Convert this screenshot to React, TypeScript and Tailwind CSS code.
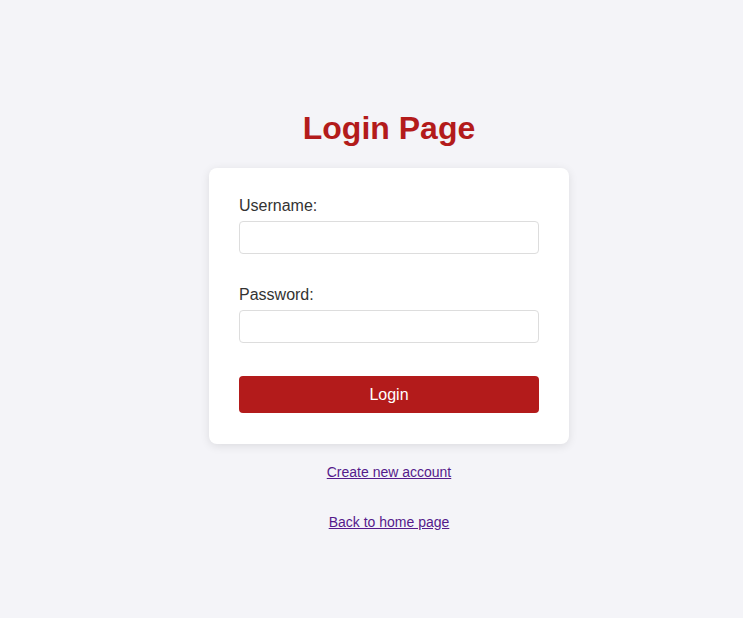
import React, { useState } from 'react';

const App = () => {
  const [username, setUsername] = useState<string>('')
  const [password, setPassword] = useState<string>('')

  return (
    <div className="min-h-[618px] w-full bg-[#f4f4f8] pl-[35px] pt-[110px] font-['Liberation_Sans',Arial,sans-serif]">
      <div className="flex flex-col items-center">
        <h1 className="mb-[21px] text-[32px] font-bold leading-[37px] text-[#b31b1b]">Login Page</h1>
        <div className="w-[360px] rounded-lg bg-white px-[30px] pt-[29px] pb-[31px] shadow-[0_2px_10px_rgba(0,0,0,0.1)]">
          <label className="block text-base leading-[18px] text-[#333]">Username:</label>
          <input
            value={username}
            onChange={(e) => setUsername(e.target.value)}
            className="mt-[6px] block h-[33px] w-full rounded border border-[#ddd] px-2 outline-none"
          />
          <label className="mt-[32px] block text-base leading-[18px] text-[#333]">Password:</label>
          <input
            type="password"
            value={password}
            onChange={(e) => setPassword(e.target.value)}
            className="mt-[6px] block h-[33px] w-full rounded border border-[#ddd] px-2 outline-none"
          />
          <button className="mt-[33px] block h-[37px] w-full rounded bg-[#b31b1b] text-base text-white">
            Login
          </button>
        </div>
        <a href="#" className="mt-[20px] text-sm leading-4 text-[#551a8b] underline">Create new account</a>
        <a href="#" className="mt-[34px] text-sm leading-4 text-[#551a8b] underline">Back to home page</a>
      </div>
    </div>
  );
};

export default App;
